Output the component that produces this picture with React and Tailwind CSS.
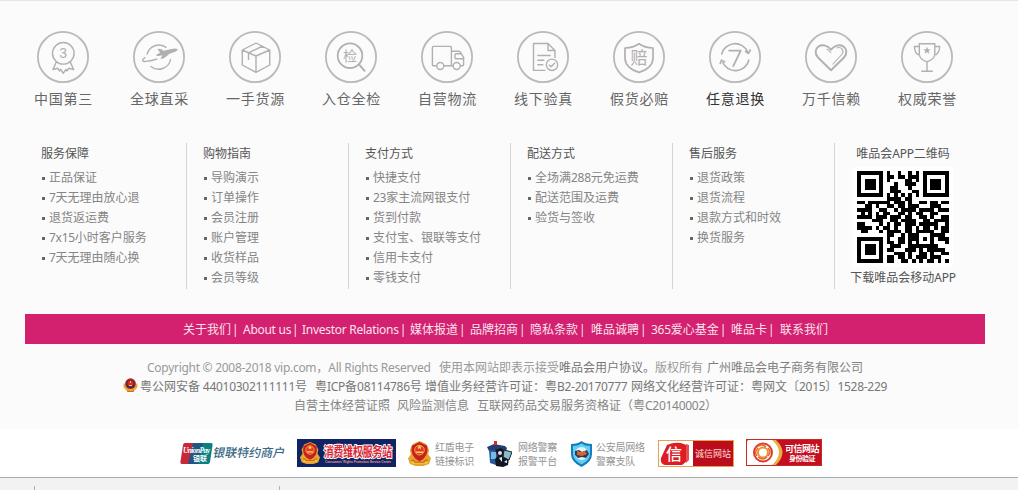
import React from "react";

const CJK = "font-['Noto_Sans','Noto_Sans_CJK_SC',sans-serif]";

/* Sets latin runs slightly tighter than the surrounding Chinese text. */
function Mixed({ children }) {
  return children.split(/([\x20-\x7e©]+)/).map((part, i) =>
    i % 2 ? <span key={i} className="whitespace-pre tracking-[-0.28px]">{part}</span> : part
  );
}

function Ring({ children }) {
  return (
    <svg width="52" height="52" viewBox="0 0 52 52" fill="none" stroke="#b0b0b0" strokeWidth="1.4" strokeLinejoin="round">
      <circle cx="26" cy="26" r="25.1" stroke="#b9b9b9" strokeWidth="1.8" />
      {children}
    </svg>
  );
}

const glyph = "font-['Liberation_Sans','Noto_Sans_CJK_SC',sans-serif]";

const features = [
  ["中国第三", <>
    <circle cx="26.3" cy="22.3" r="10.8" />
    <path d="M19.3 31 16 38.5l4.800-1.200 1.900 2.700 1-1.700 2.600 4 2.600-4 1 1.700 1.900-2.700 4.800 1.200L33.300 31" />
    <text x="26.2" y="27.3" textAnchor="middle" fontSize="14" fill="#b0b0b0" stroke="none" className={glyph}>3</text>
  </>],
  ["全球直采", <>
    <path d="M33.5 16.6A12.3 12.3 0 0 0 14 23.500M17.5 35.2A12.3 12.3 0 0 0 37.700 28" />
    <path d="M12.3 26.300c-4 3-3.700 4.600.8 4.100 3.800-.4 7.700-1.300 11.200-2.600" />
    <path d="M24.500 18.300q2-1.300 4 0l2 1.500 8-1.700q4.500-1.200 6 0 .8 1.600-3 3l-5 1.700-5.500 4.400q-2.500.8-3.500.2l2-3.200-4 .800q-2.500.2-2.300-1.300l4-2z" fill="#b0b0b0" stroke="none" />
  </>],
  ["一手货源", <path d="m27 12 13.7 7v15L27 41.3 13.3 34V19zM13.3 19 27 25l13.7-6M27 25v16M19.5 29v-7.2L33.8 15" />],
  ["入仓全检", <>
    <circle cx="25" cy="24.7" r="12.3" strokeWidth="1.8" />
    <path d="m34 33.3 6 7" strokeWidth="2" />
    <text x="25" y="29.8" textAnchor="middle" fontSize="14" fill="#b0b0b0" stroke="none" className={glyph}>检</text>
  </>],
  ["自营物流", <>
    <path d="M15.6 34.7h-3.2q-1 0-1-1V16.4q0-1 1-1h17q1 0 1 1v18.3H23M30.4 34.7h1.6M39.4 34.7h2.2q1 0 1-1v-7.4l-3.1-5q-.7-1-2-1h-7M42 27.7h-7q-1 0-1-1v-3q0-1 1-1h5" />
    <circle cx="19.3" cy="35" r="3.5" /><circle cx="35.7" cy="35" r="3.5" />
  </>],
  ["线下验真", <>
    <path d="M28.5 39.4H16.5V12.5H31l7 7V27M31 12.5v7h7M20.3 24.5H33.7M20.3 29.2h7M20.3 33.8h6" />
    <circle cx="35" cy="33.8" r="5.7" /><path d="m32 33.7 2.1 2.1 3.9-4" />
  </>],
  ["假货必赔", <>
    <path d="M26 12.7q5.7 4 14 4.3v10.5Q39.5 37.3 26 41.4 12.5 37.3 12 27.5V17q8.300-.3 14-4.300z" strokeWidth="1.7" />
    <text x="26" y="32.800" textAnchor="middle" fontSize="17" fill="#b0b0b0" stroke="none" className={glyph}>赔</text>
  </>],
  ["任意退换", <>
    <path d="M12.5 23.5A13.900 13.900 0 0 1 38.800 21M40 28.500A13.900 13.900 0 0 1 13.500 31M36 20l3.400 2.500 2.200-4M11 33l1.500-3.900 3.800 2" strokeWidth="1.6" />
    <path d="M19.500 19.700h12.200L24 35.700" strokeWidth="1.800" />
  </>],
  ["万千信赖", <>
    <path d="M26 39.200 13 26.500C5.500 18 17.500 8.500 26 18.700 34.500 8.500 46.500 18 39 26.500z" strokeWidth="1.900" />
    <path d="M21.500 18q2.500.6 4.500 4M31.500 17c5-2 8.200 3 5.300 6.500l-9.300 10" strokeWidth="1.100" />
  </>],
  ["权威荣誉", <>
    <path d="M18.300 12.700h15.500v10.800q-.8 5.300-7.800 7.300-7-2-7.700-7.300zM18 15.500h-4.600q.2 7.800 5.600 8.700M34 15.500h4.700q-.3 7.800-5.700 8.700M26 31v9M20.300 40.200h11.500" />
    <path d="m26 15.800 1 2.500 2.700.1-2.100 1.700.8 2.600-2.400-1.500-2.300 1.500.7-2.600-2.100-1.700 2.700-.1z" fill="#b0b0b0" stroke="none" />
  </>],
];

const columns = [
  ["服务保障", ["正品保证", "7天无理由放心退", "退货返运费", "7x15小时客户服务", "7天无理由随心换"]],
  ["购物指南", ["导购演示", "订单操作", "会员注册", "账户管理", "收货样品", "会员等级"]],
  ["支付方式", ["快捷支付", "23家主流网银支付", "货到付款", "支付宝、银联等支付", "信用卡支付", "零钱支付"]],
  ["配送方式", ["全场满288元免运费", "配送范围及运费", "验货与签收"]],
  ["售后服务", ["退货政策", "退货流程", "退款方式和时效", "换货服务"]],
];

const qr = [
  "1111111010010010101111111",
  "1000001011011011101000001",
  "1011101010000110101011101",
  "1011101000100111001011101",
  "1011101001100010001011101",
  "1000001001110001101000001",
  "1111111010101010101111111",
  "0000000011110110000000000",
  "1101111110111010011011011",
  "0011010011011011100011100",
  "1111001100101111011110111",
  "0101010110011010110011000",
  "1111011101110110011010011",
  "0000111001101111001101111",
  "1100001010110111011111001",
  "1111010110100110101101011",
  "0110001011110110111110011",
  "0000000011001011100011110",
  "1111111010011011101010111",
  "1000001011011010100010001",
  "1011101001110011111111000",
  "1011101011000111010111110",
  "1011101000111010011010011",
  "1000001011011010111011100",
  "1111111011001101010110101",
];

function QrCode() {
  return (
    <svg width="100" height="100" viewBox="-1.150 -1.150 27.300 27.300" shapeRendering="crispEdges" className="bg-white">
      <path d={qr.map((r, y) => [...r].map((c, x) => (c === "1" ? `M${x} ${y}h1v1h-1z` : "")).join("")).join("")} />
    </svg>
  );
}

const nav = [
  ["关于我们", "w-[60px]"], ["About us", "w-[59px]"], ["Investor Relations", "w-[108px]"], ["媒体报道", "w-[60px]"],
  ["品牌招商", "w-[60px]"], ["隐私条款", "w-[61px]"], ["唯品诚聘", "w-[60px]"], ["365爱心基金", "w-[80px]"],
  ["唯品卡", "w-[49px]"], ["联系我们", "w-[48px]"],
];

function Line({ parts, className }) {
  return (
    <div className={`flex h-[19px] items-center whitespace-nowrap ${className}`}>
      {parts.map(([t, w]) => <span key={t} className={`shrink-0 ${w}`}><Mixed>{t}</Mixed></span>)}
    </div>
  );
}

function Emblem({ w, h, className = "" }) {
  return (
    <svg width={w} height={h} viewBox="0 0 24 26" preserveAspectRatio="none" className={`shrink-0 ${className}`}>
      <path d="M5 3 12 0l7 3 3 6-1 5 3 4-2 6-6 2H8l-6-2-2-6 3-4-1-5z" fill="#e4a52d" />
      <path d="M2 18q10 8 20 0l-2 6H4z" fill="#f3bc3b" />
      <path d="m12 1 8 4q2 12-8 16Q2 17 4 5z" fill="#c81f20" />
      <circle cx="12" cy="9.500" r="5" fill="#e2372b" stroke="#f0b13d" strokeWidth="1" />
      <path d="m12 4 .8 1.700 1.700.1-1.300 1.100.4 1.700-1.600-1-1.600 1 .4-1.700-1.300-1.100 1.700-.1zM8.500 11h7v1.500h-7z" fill="#ffd85a" />
      <path d="M3 20h3l1 2h10l1-2h3" stroke="#c4471f" fill="none" />
    </svg>
  );
}

function PoliceEmblem() {
  return (
    <svg width="15" height="14" viewBox="0 0 15 14" className="mt-[1px] shrink-0">
      <path d="M1 5Q-.5 9 2 11l3 2.500h5L13 11q2.500-2 1-6l-3 4H4z" fill="#e8a83a" />
      <path d="M3.500 12q4 2 8 0l-1 2h-6z" fill="#bd7a1c" />
      <circle cx="7.500" cy="5.700" r="5.400" fill="#b3271f" />
      <circle cx="7.500" cy="6" r="4" fill="#222e70" />
      <circle cx="7.500" cy="5.500" r="3" fill="#e02820" />
      <path d="M6 7h3v1H6zM7 3h1v2H7z" fill="#f2c64e" />
    </svg>
  );
}

function SealText({ a, b, className }) {
  return <div className={`text-[10px] leading-[14px] text-[#949494] whitespace-nowrap tracking-[-0.25px] ${className}`}><div>{a}</div><div>{b}</div></div>;
}

function Badges() {
  return (
    <div className="flex h-[48px] items-start bg-white pl-[180px] pt-[10px]">
      <div className="flex h-[28px] w-[117px] items-center">
        <svg width="33" height="21" viewBox="0 0 33 21">
          <path d="M5 0h9L9 21H2Q0 21 .4 19L3 2Q3.400 0 5 0" fill="#c9283a" />
          <path d="M13 0h11l-5 21H8z" fill="#205782" />
          <path d="M23 0h8q2 0 1.600 2L30 19q-.4 2-2 2H18z" fill="#087f82" />
          <text x="3" y="10" fontSize="7.500" fontStyle="italic" fontWeight="bold" fill="#fff" textLength="27" className="font-['Liberation_Serif',serif]">UnionPay</text>
          <text x="13" y="17.500" fontSize="7" fontWeight="bold" fill="#fff" textLength="14" className={glyph}>银联</text>
        </svg>
        <span className="-skew-x-12 whitespace-nowrap text-[12px] font-medium text-[#386784]">银联特约商户</span>
      </div>
      <div className="flex h-[28px] w-[99px] items-center bg-[#102464] pl-[3px]">
        <Emblem w="20" h="22" />
        <svg width="72" height="28" viewBox="0 0 72 28" className="ml-[3px]">
          <text x="1" y="17" fontSize="13" fontWeight="700" transform="scale(.76 1)" textLength="90" fill="#df2430" stroke="#fff" strokeWidth="2" paintOrder="stroke" className={glyph}>消费维权服务站</text>
          <text x="2" y="24" fontSize="3.200" fontWeight="bold" fill="#ed9a91" textLength="66" lengthAdjust="spacingAndGlyphs" className={glyph}>Consumers' Rights Protection Service Center</text>
        </svg>
      </div>
      <div className="ml-[12px] flex w-[79px] pt-[2px]">
        <Emblem w="23" h="25" /><SealText a="红盾电子" b="链接标识" className="-mt-px ml-[4px]" />
      </div>
      <div className="flex w-[83px] pt-[2px]">
        <svg width="25" height="26" viewBox="0 0 25 26" className="shrink-0">
          <path d="M0 6 7 3l11 2 2 2-1 3H2z" fill="#253e70" />
          <path d="M2 9h15v12l-5 4-9-3z" fill="#28599b" />
          <path d="M4 11h5v7H4zM11 11h5v4h-5z" fill="#74b9e9" />
          <path d="M7 0h3v4H7z" fill="#e1292c" />
          <path d="m8 9 6-2 4 3-1 4 5 3-1 7-5 2-7-1-1-7 3-3z" fill="#111722" />
          <path d="m17 9 8 2-3 8-6-3z" fill="#8bbbc8" stroke="#17222f" />
          <circle cx="13" cy="12" r="2" fill="#f0d7cf" />
          <path d="m12 17 3-1v5zM17 21l3-2v3z" fill="#e8eef3" />
        </svg>
        <SealText a="网络警察" b="报警平台" className="-mt-px ml-[6px]" />
      </div>
      <div className="flex w-[87px] pt-[2px]">
        <svg width="23" height="26" viewBox="0 0 23 26" className="shrink-0">
          <path d="M11.500 0Q15 3 22 3v10q0 8-10.500 13Q1 21 1 13V3q7 0 10.500-3z" fill="#157dbd" />
          <path d="M11.500 2.500Q15 5 20 5v8q0 6-8.500 10.500Q3 19 3 13V5q5 0 8.500-2.500z" fill="#62cff4" />
          <circle cx="11.500" cy="12.500" r="6.500" fill="#e3f5fc" />
          <path d="m5 10 4-1 3 2 5-2 2 4-3 4-4-1-4 1-3-3z" fill="#283965" />
          <path d="m7 10 4 1 4-1 2 3-5 2-5-1z" fill="#d76627" />
        </svg>
        <SealText a="公安局网络" b="警察支队" className="-mt-px ml-[3px]" />
      </div>
      <div className="ml-px mt-px flex h-[27px] w-[76px] border border-[#e6a34f] bg-white">
        <svg width="34" height="25" viewBox="0 0 34 25">
          <path d="M8 4Q17 0 25 3l4 2-1 15-5 4H6q-5-1-4-7z" fill="#dd1c24" />
          <path d="m27 3 3 1v15l-3 3z" fill="#e65055" />
          <text x="15" y="18.500" textAnchor="middle" fontSize="16" fontWeight="500" fill="#fff" className={glyph}>信</text>
        </svg>
        <div className="flex flex-1 items-center justify-center whitespace-nowrap bg-[#bb0d1c] text-[9px] text-[#ffdad5]">诚信网站</div>
      </div>
      <div className="ml-[12px] flex h-[27px] w-[76px] border border-[#c72b24] bg-[#c50e20]">
        <svg width="38" height="25" viewBox="0 0 38 25" className="shrink-0">
          <path d="M0 2Q0 0 2 0h27q13 12 0 25H0z" fill="#ebae43" />
          <path d="M0 2Q0 0 2 0h23q14 12 0 25H0z" fill="#fff" />
          <g fill="none" stroke="#dc3b29" strokeWidth="2">
            <circle cx="16" cy="12.500" r="9" />
            <circle cx="16" cy="12.500" r="5" stroke="#ef9234" />
            <path d="M10 7q5-4 9 0M21 8q4 4 0 8M20 17q-4 4-9 0M10 16q-3-4 1-8" stroke="#e26a2d" strokeWidth="1.500" />
          </g>
        </svg>
        <div className="pt-[3px] text-center font-bold text-white whitespace-nowrap">
          <div className="text-[9px] leading-[11px] tracking-[-0.5px]">可信网站</div>
          <div className="text-[7px] leading-[9px] tracking-[-0.5px]">身份验证</div>
        </div>
      </div>
    </div>
  );
}

export default function App() {
  return (
    <div lang="zh-CN" className={`h-[490px] w-[1018px] overflow-hidden bg-[#fbfbfb] text-[12px] ${CJK}`}>
      <div className="h-[429px] border-t border-[#e6e6e6] pl-[25px] pr-[33px] pt-[30px]">
        <ul className="-ml-[10px] flex w-[970px]">
          {features.map(([label, icon]) => (
            <li key={label} className="flex w-[96px] shrink-0 flex-col items-center">
              <Ring>{icon}</Ring>
              <span className={`mt-[6px] whitespace-nowrap pl-[1px] text-[14px] leading-[20px] tracking-[0.7px] ${label === "任意退换" ? "text-[#333]" : "text-[#666]"}`}>{label}</span>
            </li>
          ))}
        </ul>
        <div className="mt-[34px] flex h-[146px]">
          {columns.map(([title, items]) => (
            <section key={title} className="w-[162px] border-r border-[#d5d5d5] pl-[16px]">
              <h3 className="h-[25px] pt-px leading-[20px] text-[#555]">{title}</h3>
              <ul>
                {items.map((t) => (
                  <li key={t} className="flex h-[20px] items-center whitespace-nowrap leading-[20px] text-[#858585]">
                    <i className="ml-px mr-[4px] h-[3px] w-[3px] bg-[#666]" />
                    <span><Mixed>{t}</Mixed></span>
                  </li>
                ))}
              </ul>
            </section>
          ))}
          <section className="flex w-[136px] flex-col items-center whitespace-nowrap text-[#555]">
            <h3 className="pt-px leading-[20px]"><Mixed>唯品会APP二维码</Mixed></h3>
            <div className="mb-px mt-[3px]"><QrCode /></div>
            <p className="leading-[20px]"><Mixed>下载唯品会移动APP</Mixed></p>
          </section>
        </div>
        <nav className="mt-[25px] flex h-[30px] items-center bg-[#d3206f] pl-[158px] pt-[2px] text-[#fbe3ee]">
          {nav.map(([t, w], i) => (
            <span key={t} className={`flex shrink-0 items-center gap-px whitespace-nowrap ${w}`}>
              <span><Mixed>{t}</Mixed></span>{i < 9 && <span>|</span>}
            </span>
          ))}
        </nav>
        <div className="pt-[14px]">
          <Line className="pl-[122px] text-[#999]" parts={[
            ["Copyright © 2008-2018 vip.com，All Rights Reserved", "w-[292px]"],
            ["使用本网站即表示接受", "w-[120px]"],
            ["唯品会用户协议。", "w-[96px] text-[#777]"],
            ["版权所有", "w-[52px]"],
            ["广州唯品会电子商务有限公司", "w-[157px] text-[#808080]"],
          ]} />
          <div className="flex pl-[98px]">
            <PoliceEmblem />
            <Line className="pl-[2px] text-[#777]" parts={[
              ["粤公网安备 44010302111111号", "w-[175px]"],
              ["粤ICP备08114786号", "w-[110px]"],
              ["增值业务经营许可证：", "w-[120px]"],
              ["粤B2-20170777", "w-[86px]"],
              ["网络文化经营许可证：", "w-[120px]"],
              ["粤网文〔2015〕1528-229", "w-[140px]"],
            ]} />
          </div>
          <Line className="pl-[269px] text-[#858585]" parts={[
            ["自营主体经营证照", "w-[103px]"],
            ["风险监测信息", "w-[80px]"],
            ["互联网药品交易服务资格证（粤C20140002）", "w-[240px]"],
          ]} />
        </div>
      </div>
      <Badges />
      <div className="flex h-[13px] items-end border-t border-[#aaa] bg-[#f2f2f2] pl-[34px]">
        <div className="h-[4px] w-[246px] border-x border-[#b5b5b5]" />
      </div>
    </div>
  );
}
